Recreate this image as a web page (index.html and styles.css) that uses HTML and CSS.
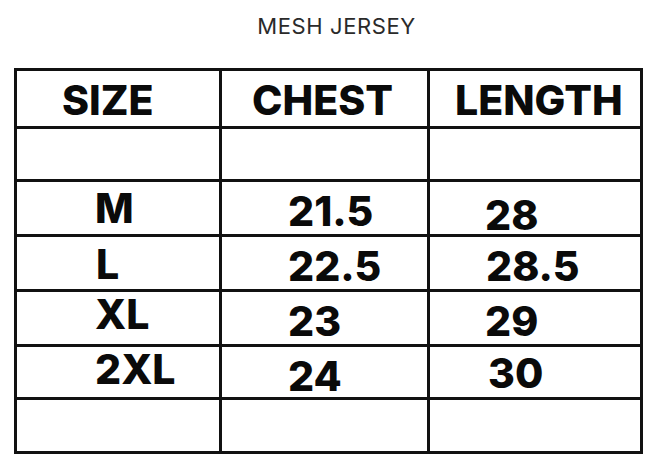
FILE: index.html
```html
<!DOCTYPE html>
<html lang="en">
<head>
<meta charset="utf-8">
<title>Mesh Jersey Size Chart</title>
<link rel="stylesheet" href="styles.css">
</head>
<body>
<main class="page">
  <h1 class="title">MESH JERSEY</h1>
  <div class="chart">
    <div class="cell head c1">SIZE</div>
    <div class="cell head c2">CHEST</div>
    <div class="cell head c3">LENGTH</div>

    <div class="cell blank"></div>
    <div class="cell blank"></div>
    <div class="cell blank"></div>

    <div class="cell c1 pt6">M</div>
    <div class="cell c2 pt9">21.5</div>
    <div class="cell c3 pt13">28</div>

    <div class="cell c1 pt7 l-shift">L</div>
    <div class="cell c2 pt9">22.5</div>
    <div class="cell c3 pt9 r-shift">28.5</div>

    <div class="cell c1 pt2">XL</div>
    <div class="cell c2 pt9">23</div>
    <div class="cell c3 pt9">29</div>

    <div class="cell c1 pt2">2XL</div>
    <div class="cell c2 pt9">24</div>
    <div class="cell c3 pt6 r-shift2">30</div>

    <div class="cell blank"></div>
    <div class="cell blank"></div>
    <div class="cell blank"></div>
  </div>
</main>
</body>
</html>
```

FILE: styles.css
```css
* { box-sizing: border-box; }

html, body {
  margin: 0;
  padding: 0;
  background: #ffffff;
}

.page {
  width: 660px;
  height: 468px;
  padding-top: 13px;
  padding-left: 14px;
}

.title {
  margin: 0;
  height: 55px;
  padding-left: 16px;
  width: 629px;
  text-align: center;
  font-family: Inter, "Noto Sans", sans-serif;
  font-weight: 400;
  font-size: 22px;
  line-height: 26px;
  letter-spacing: 0.6px;
  color: #2a2a2a;
}

.chart {
  display: grid;
  grid-template-columns: 202px 205px 210px;
  grid-template-rows: 55px 50px 52px 52px 52px 50px 51px;
  gap: 3px;
  padding: 3px;
  width: 629px;
  background: #111111;
}

.cell {
  background: #ffffff;
  font-family: Inter, "Noto Sans", sans-serif;
  font-weight: 800;
  font-size: 41px;
  line-height: 41px;
  color: #0a0a0a;
  white-space: nowrap;
}

.head { padding-top: 9px; }
.head.c1 { padding-left: 45px; }
.head.c2 { padding-left: 30px; }
.head.c3 { padding-left: 25px; }

.c1 { padding-left: 78px; }
.c2 { padding-left: 66px; }
.c3 { padding-left: 55px; }

.l-shift { padding-left: 79px; }
.r-shift { padding-left: 56px; }
.r-shift2 { padding-left: 58px; }

.pt2 { padding-top: 2px; }
.pt6 { padding-top: 6px; }
.pt7 { padding-top: 7px; }
.pt9 { padding-top: 9px; }
.pt13 { padding-top: 13px; }
```
